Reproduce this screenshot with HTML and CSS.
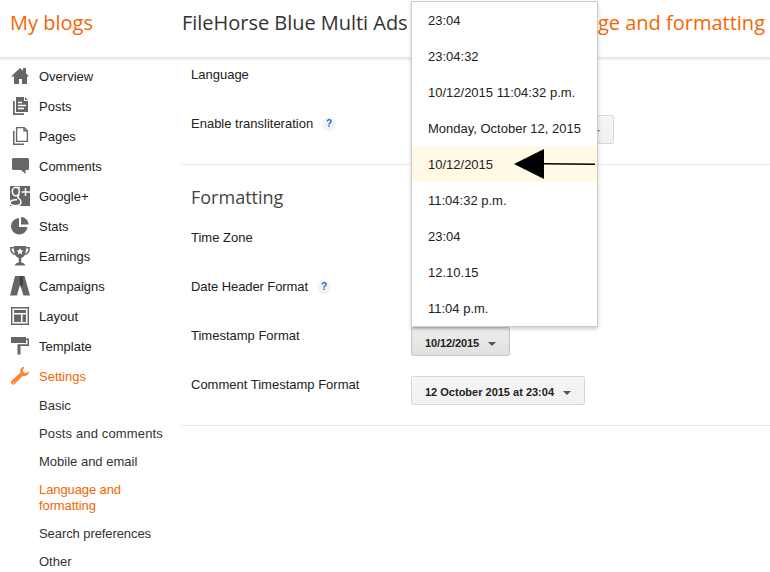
FILE: index.html
```html
<!DOCTYPE html>
<html lang="en">
<head>
<meta charset="utf-8">
<title>Language and formatting</title>
<link rel="stylesheet" href="styles.css">
</head>
<body>
<header class="header">
  <a class="my-blogs">My blogs</a>
  <div class="crumbs"><h1 class="blog-name">FileHorse Blue Multi Ads</h1><span class="page-name">ge and formatting</span></div>
</header>
<div class="body">
  <nav class="sidebar">
    <a class="nav"><svg class="icon" viewBox="0 0 20 20"><path d="M1 10.500 10 2l3 2.700V2h3v5.300l3 3.200h-2V18h-5v-5H9v5H4v-7.500z"/></svg><span>Overview</span></a>
    <a class="nav"><svg class="icon" viewBox="0 0 20 20"><path d="M6 1h8v4h4v11H6zM15 1l3 3h-3zM3 5h1.700v12.300H14V19H3z"/><path class="cut" d="M8 6.500h4M8 9.500h8M8 12.500h6"/></svg><span>Posts</span></a>
    <a class="nav"><svg class="icon" viewBox="0 0 20 20"><path d="M3 5h1.500v12.500H14V19H3z"/><path class="line" d="M6.600 1.600h7.600l3.200 3.200v10.600H6.600zM14 1.600v3.200h3.400"/></svg><span>Pages</span></a>
    <a class="nav"><svg class="icon" viewBox="0 0 20 20"><path d="M3 2h15l1 1v10l-1 1h-2.500v4L11 14H3l-1-1V3z"/></svg><span>Comments</span></a>
    <a class="nav"><svg class="icon" viewBox="0 0 20 20"><path d="M0 0h20v20H0z"/><path class="cut" d="M10 1.500H6.500M9 8.500C9 10 7.800 10 7.800 11.200S11 13 11 16s-3 3.700-5.500 3.700S0 18.500 0 16.800s2.500-3.300 7-3M15.500 2v8M11.500 6H20"/><ellipse class="cut" cx="5.800" cy="5.500" rx="3.500" ry="4.200"/></svg><span>Google+</span></a>
    <a class="nav"><svg class="icon" viewBox="0 0 20 20"><path d="M9 2v9h8.500A8.300 8.300 0 1 1 9 2zM11 1a7.500 7.500 0 0 1 7.500 7.500H11z"/></svg><span>Stats</span></a>
    <a class="nav"><svg class="icon" viewBox="0 0 20 20"><path d="M4 0h12c0 7-1 11-4.800 12v4.500c2 0 3.300 1 3.800 2.500v.5H5V19c.5-1.500 1.800-2.500 3.800-2.500V12C5 11 4 7 4 0z"/><path class="line" d="M4.500 1.700H.7C.7 6 2.500 8 6 8.500M15.500 1.700h3.800C19.300 6 17.500 8 14 8.500"/><path class="star" d="m10 2 1 2.200 2.500.2-1.900 1.600.6 2.500L10 7.200 7.800 8.500 8.400 6 6.500 4.400 9 4.200z"/></svg><span>Earnings</span></a>
    <a class="nav"><svg class="icon" viewBox="0 0 20 20"><path d="M5 0h9.500L20 19.500h-6.500L10 8.500l-3 11H0z"/><path class="dark" d="M9.500 0H13v9l-2 2.500-1-3z"/></svg><span>Campaigns</span></a>
    <a class="nav"><svg class="icon" viewBox="0 0 20 20"><path class="line" d="M1.700 1.700h16.600v16.600H1.700z"/><path d="M4 4h12v3H4zM4 8.500h7V16H4zM12.500 8.500H16V16h-3.500z"/></svg><span>Layout</span></a>
    <a class="nav"><svg class="icon" viewBox="0 0 20 20"><path d="M1 1h15v6H1z"/><path d="M16 2.500h3V10h-8.500v8.500h-3V8.200h10V4H16z"/></svg><span>Template</span></a>
    <a class="nav active"><svg class="icon" viewBox="0 0 20 20"><path d="M14.500 1c-3-.5-5 2.500-4 5.500L1.500 14.800c-1.500 1.700.8 5 3 3.500l8.300-8.600c3.300 1 6.500-1.200 6.200-4.400l-3 1.900-2.500-.7-.6-2.500zM3.500 16l.8.8-.8.7-.8-.7z" fill-rule="evenodd"/></svg><span>Settings</span></a>
    <div class="sub">
      <a>Basic</a>
      <a class="wide">Posts and comments</a>
      <a>Mobile and email</a>
      <a class="selected">Language and<br>formatting</a>
      <a class="tight">Search preferences</a>
      <a>Other</a>
    </div>
  </nav>
  <main class="main">
    <section class="group">
      <div class="row"><span class="label">Language</span></div>
      <div class="row"><span class="label">Enable transliteration<i class="help">?</i></span><button class="select disabled"><b class="caret"></b></button></div>
    </section>
    <section class="group formatting">
      <h2 class="heading">Formatting</h2>
      <div class="row"><span class="label">Time Zone</span></div>
      <div class="row"><span class="label tight-label">Date Header Format<i class="help">?</i></span></div>
      <div class="row"><span class="label">Timestamp Format</span>
        <div class="anchor"><button class="select open">10/12/2015<b class="caret"></b></button>
          <ul class="menu">
            <li>23:04</li>
            <li>23:04:32</li>
            <li>10/12/2015 11:04:32 p.m.</li>
            <li>Monday, October 12, 2015</li>
            <li class="hover">10/12/2015<svg class="arrow" viewBox="0 0 82 30"><path d="M0 15 30 0v14l51 .5v1.500L30 15.500V30z"/></svg></li>
            <li>11:04:32 p.m.</li>
            <li>23:04</li>
            <li>12.10.15</li>
            <li>11:04 p.m.</li>
          </ul>
        </div>
      </div>
      <div class="row"><span class="label">Comment Timestamp Format</span><button class="select">12 October 2015 at 23:04<b class="caret"></b></button></div>
    </section>
  </main>
</div>
</body>
</html>
```
FILE: styles.css
```css
* { box-sizing: border-box; }
body { margin: 0; width: 770px; height: 572px; overflow: hidden; background: #fff; color: #222; font: 13px/16px "Liberation Sans", Arial, sans-serif; }
.header { display: flex; height: 61px; padding: 8px 5px 0 10px; font: 20px/30px "Open Sans", sans-serif; background: linear-gradient(#fff 57px, #e6e6e6 57px, #ececec 59px, #f8f8f8 60px, #fff 61px); white-space: nowrap; }
.my-blogs { width: 172px; color: #f56600; }
.crumbs { flex: 1; display: flex; justify-content: space-between; }
.blog-name { margin: 0; font: inherit; color: #333; letter-spacing: -.03px; }
.page-name { color: #f56600; }
.body { display: flex; }
.sidebar { width: 181px; flex: none; padding-top: 1px; }
.nav { display: flex; align-items: center; height: 30px; padding-left: 10px; gap: 9px; }
.icon { width: 20px; height: 20px; margin-bottom: 2px; flex: none; fill: #666; }
.line { fill: none; stroke: #666; stroke-width: 1.4; }
.cut { fill: none; stroke: #fff; stroke-width: 1.5; }
.star { fill: #fff; }
.dark { fill: #444; }
.active { color: #f56600; }
.active .icon { fill: #ff8533; }
.sub { display: flex; flex-direction: column; padding-left: 39px; color: #333; white-space: nowrap; }
.sub a { padding: 6px 0; }
.sub .wide { letter-spacing: .14px; }
.sub .tight { letter-spacing: -.08px; }
.sub .selected { color: #f56600; letter-spacing: -.1px; }
.main { flex: 1; margin-left: 1px; min-width: 0; }
.group { border-bottom: 1px solid #e8e8e8; height: 104px; padding: 5px 0 0 9px; }
.formatting { height: 261px; padding-top: 18px; }
.heading { margin: 0 0 18px; font: 18px/28px "Open Sans", sans-serif; color: #444; }
.row { display: flex; align-items: flex-start; height: 29px; margin-bottom: 20px; }
.label { display: flex; align-items: center; width: 220px; height: 16px; margin-top: 1px; flex: none; white-space: nowrap; }
.tight-label { letter-spacing: -.08px; }
.help { width: 14px; height: 14px; margin-left: 9px; border-radius: 50%; background: #f3f3f3; color: #1a66d2; font: bold 10px/14px "Liberation Sans", sans-serif; text-align: center; letter-spacing: 0; }
.select { display: flex; align-items: center; height: 29px; padding: 2px 13px 0; border: 1px solid #d8d8d8; border-radius: 2px; background: linear-gradient(#f6f6f6, #f0f0f0); color: #222; font: bold 11px/16px "Liberation Sans", sans-serif; white-space: nowrap; }
.caret { margin: 2px 0 0 9px; border: 4px solid transparent; border-top-color: #555; border-bottom: 0; }
.disabled { width: 203px; justify-content: flex-end; }
.open { letter-spacing: -.1px; border-color: #ccc; background: linear-gradient(#eee, #e0e0e0); box-shadow: inset 0 1px 2px rgba(0,0,0,.1); }
.anchor { position: relative; }
.menu { position: absolute; left: 0; bottom: 29px; width: 187px; margin: 0; padding: 0; list-style: none; border: 1px solid #ccc; background: #fff; box-shadow: 0 2px 4px rgba(0,0,0,.2); }
.menu li { display: flex; align-items: center; height: 36px; padding: 2px 0 0 16px; white-space: nowrap; }
.menu .hover { background: #fff9e6; }
.arrow { width: 82px; height: 30px; margin: 0 0 2px 21px; }
```
